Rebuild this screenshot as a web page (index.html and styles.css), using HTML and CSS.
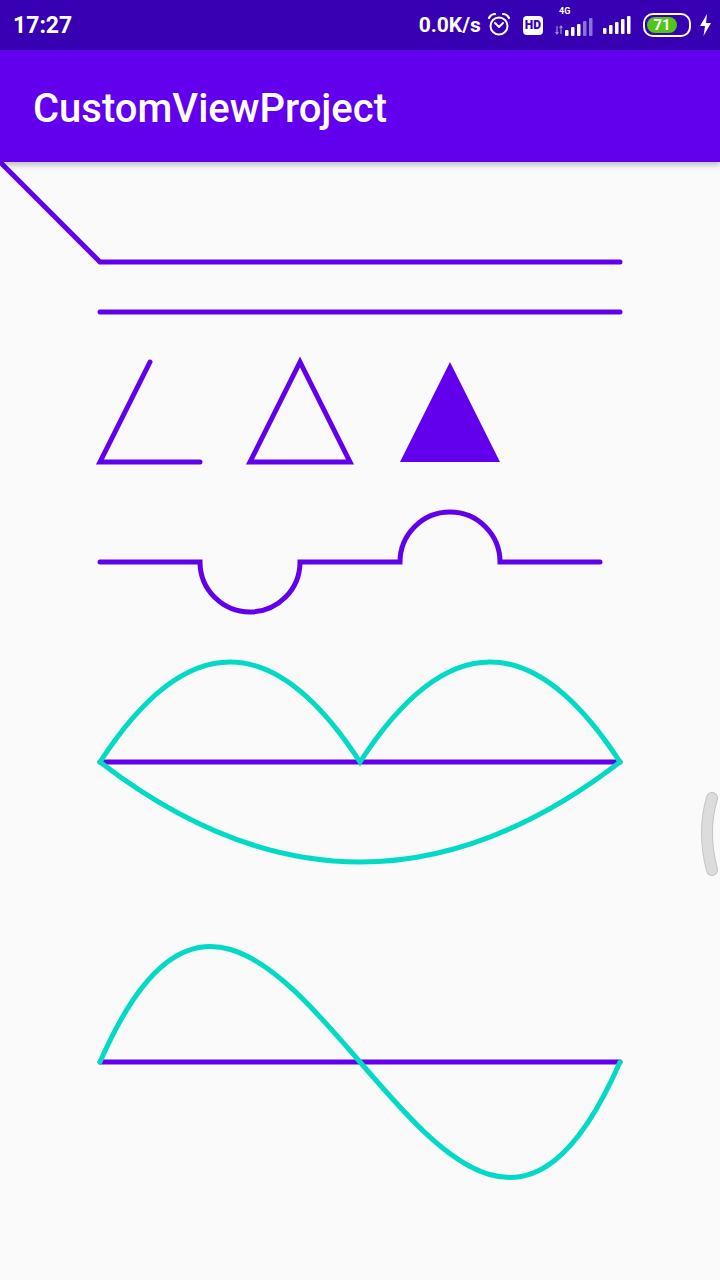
FILE: index.html
```html
<!DOCTYPE html>
<html lang="en">
<head>
  <meta charset="UTF-8" />
  <meta name="viewport" content="width=device-width, initial-scale=1.0"/>
  <title>CustomViewProject</title>
  <link rel="stylesheet" href="styles.css">
</head>
<body>
  <div class="status-bar">
    <span class="clock">17:27</span>
    <div class="status-icons">
      <span class="speed">0.0K/s</span>
      <svg class="ico" width="24" height="26" viewBox="0 0 24 26">
        <circle cx="12" cy="14" r="8.5" fill="none" stroke="#fff" stroke-width="2"/>
        <path d="M8 11 L12 15 L16 11" fill="none" stroke="#fff" stroke-width="2" stroke-linecap="round" stroke-linejoin="round"/>
        <path d="M2 6 Q4 2 8 2" fill="none" stroke="#fff" stroke-width="2.2" stroke-linecap="round"/>
        <path d="M22 6 Q20 2 16 2" fill="none" stroke="#fff" stroke-width="2.2" stroke-linecap="round"/>
      </svg>
      <span class="hd">HD</span>
      <div class="sig4g">
        <span class="tag4g">4G</span>
        <svg width="38" height="18" viewBox="0 0 38 18">
          <path d="M2 8 V16 M0.5 14 L2 16 L3.5 14 M6 16 V8 M4.5 10 L6 8 L7.5 10" fill="none" stroke="#9d8fd6" stroke-width="1.2"/>
          <rect x="10" y="12" width="3.5" height="6" rx="1" fill="#fff"/>
          <rect x="16" y="9" width="3.5" height="9" rx="1" fill="#fff"/>
          <rect x="22" y="6" width="3.5" height="12" rx="1" fill="#fff"/>
          <rect x="28" y="3" width="3.5" height="15" rx="1" fill="#8a74d4"/>
          <rect x="34" y="0" width="3.5" height="18" rx="1" fill="#8a74d4"/>
        </svg>
      </div>
      <svg class="ico" width="28" height="18" viewBox="0 0 28 18">
        <rect x="0" y="12" width="3.5" height="6" rx="1" fill="#fff"/>
        <rect x="6" y="9" width="3.5" height="9" rx="1" fill="#fff"/>
        <rect x="12" y="6" width="3.5" height="12" rx="1" fill="#fff"/>
        <rect x="18" y="3" width="3.5" height="15" rx="1" fill="#fff"/>
        <rect x="24" y="0" width="3.5" height="18" rx="1" fill="#fff"/>
      </svg>
      <div class="battery">
        <div class="battery-fill"><span>71</span></div>
      </div>
      <svg class="ico" width="13" height="22" viewBox="0 0 13 22">
        <path d="M8 0 L1 12 H6 L4.5 22 L12 9 H7 Z" fill="#fff"/>
      </svg>
    </div>
  </div>

  <header class="app-bar">CustomViewProject</header>

  <main class="canvas">
    <svg width="720" height="1118" viewBox="0 0 720 1118">
      <g class="purple">
        <path d="M0 0 L100 100 L620 100"/>
        <path d="M100 150 L620 150"/>
        <path d="M150 200 L100 300 L200 300"/>
        <path d="M300 200 L250 300 L350 300 Z"/>
        <path d="M100 400 L200 400 A50 50 0 0 0 300 400 L400 400 A50 50 0 0 1 500 400 L600 400"/>
        <path d="M100 600 L620 600"/>
        <path d="M100 900 L620 900"/>
      </g>
      <path class="solid" d="M450 200 L400 300 L500 300 Z"/>
      <g class="teal">
        <path d="M100 600 Q230 400 360 600 Q490 400 620 600"/>
        <path d="M100 600 Q360 800 620 600"/>
        <path d="M100 900 C275 500 445 1300 620 900"/>
      </g>
    </svg>
    <svg class="edge-handle" width="24" height="84" viewBox="0 0 24 84">
      <path d="M16 6 Q6 40 16 78" fill="none" stroke="#c4c4c4" stroke-width="12" stroke-linecap="round"/>
      <path d="M16 6 Q6 40 16 78" fill="none" stroke="#dcdcdc" stroke-width="10" stroke-linecap="round"/>
    </svg>
  </main>
</body>
</html>
```

FILE: styles.css
```css
body {
  margin: 0;
  background: #fafafa;
  font-family: Roboto, "Noto Sans", sans-serif;
  width: 720px;
  height: 1280px;
  overflow: hidden;
}
.status-bar {
  height: 50px;
  background: #3700b3;
  color: #fff;
  display: flex;
  align-items: center;
  justify-content: space-between;
  padding: 0 8px 0 13px;
}
.clock {
  font-size: 23px;
  font-weight: 700;
}
.status-icons {
  display: flex;
  align-items: center;
  gap: 8px;
}
.speed {
  font-size: 21px;
  font-weight: 700;
  margin-right: -2px;
}
.ico {
  display: block;
}
.hd {
  background: #fff;
  color: #3700b3;
  font-size: 12px;
  font-weight: 900;
  border-radius: 4px;
  padding: 2px 2px;
  line-height: 15px;
  margin: 0 4px;
}
.sig4g {
  position: relative;
  padding-top: 8px;
  margin-right: 2px;
}
.tag4g {
  position: absolute;
  top: -4px;
  left: 4px;
  font-size: 9px;
  font-weight: 700;
}
.battery {
  width: 40px;
  height: 16px;
  border: 2px solid #fff;
  border-radius: 10px;
  padding: 2px;
  margin-left: 4px;
  box-sizing: content-box;
}
.battery-fill {
  width: 30px;
  height: 16px;
  background: #52c41a;
  border-radius: 8px;
  display: flex;
  align-items: center;
  justify-content: center;
  color: #fff;
  font-size: 15px;
  font-weight: 700;
}
.app-bar {
  position: relative;
  z-index: 1;
  height: 112px;
  background: #6200ee;
  color: #fff;
  font-size: 40px;
  font-weight: 500;
  display: flex;
  align-items: center;
  padding-left: 33px;
  padding-top: 5px;
  box-sizing: border-box;
  box-shadow: 0 3px 6px rgba(0,0,0,0.25);
}
.canvas {
  position: relative;
}
.canvas > svg:first-child {
  display: block;
}
.purple path {
  fill: none;
  stroke: #6200ee;
  stroke-width: 5;
  stroke-linecap: round;
}
.solid {
  fill: #6200ee;
}
.teal path {
  fill: none;
  stroke: #03dac5;
  stroke-width: 5;
  stroke-linecap: round;
}
.edge-handle {
  position: absolute;
  right: 0;
  top: 630px;
}
```
